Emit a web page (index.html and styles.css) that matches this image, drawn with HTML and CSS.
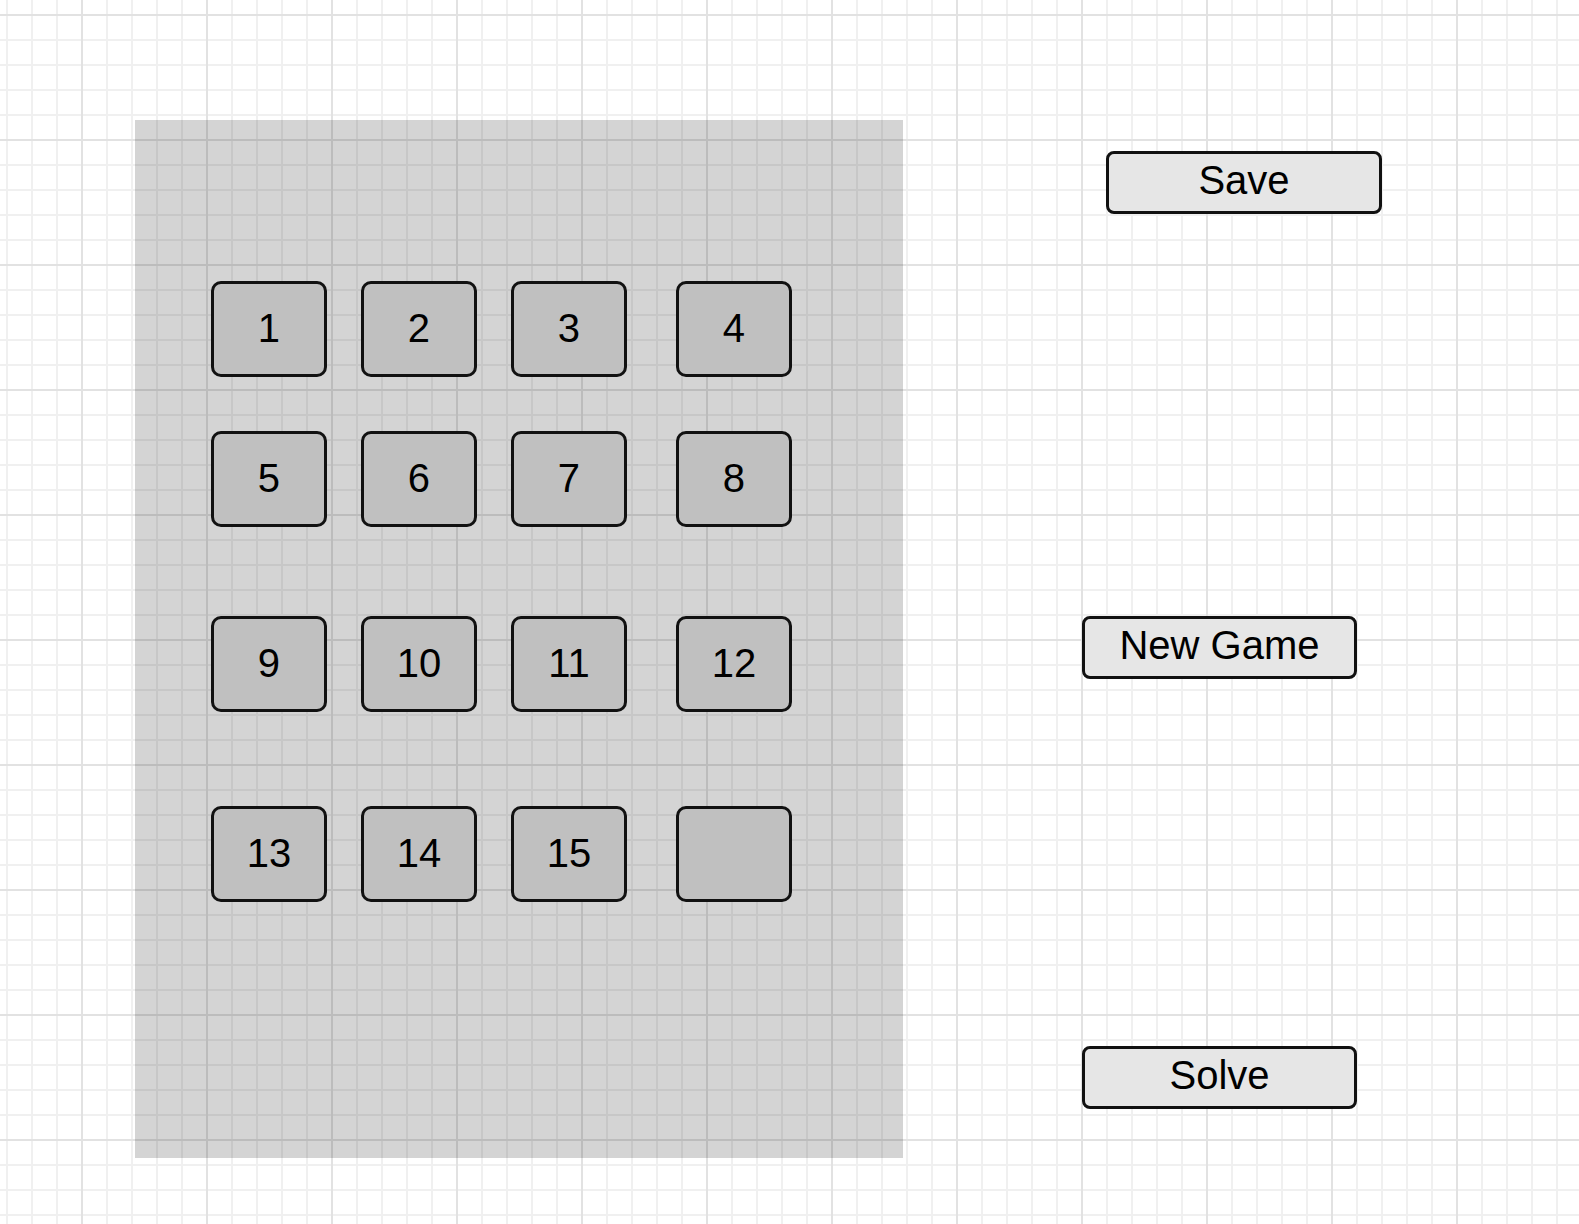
FILE: index.html
```html
<!DOCTYPE html>
<html lang="en">
<head>
<meta charset="utf-8">
<title>15 Puzzle</title>
<link rel="stylesheet" href="styles.css">
</head>
<body>
<div class="canvas">
  <div class="board">
    <div class="row row-1">
      <div class="tile">1</div>
      <div class="tile">2</div>
      <div class="tile">3</div>
      <div class="tile tile-last">4</div>
    </div>
    <div class="row row-2">
      <div class="tile">5</div>
      <div class="tile">6</div>
      <div class="tile">7</div>
      <div class="tile tile-last">8</div>
    </div>
    <div class="row row-3">
      <div class="tile">9</div>
      <div class="tile">10</div>
      <div class="tile">11</div>
      <div class="tile tile-last">12</div>
    </div>
    <div class="row row-4">
      <div class="tile">13</div>
      <div class="tile">14</div>
      <div class="tile">15</div>
      <div class="tile tile-last"></div>
    </div>
  </div>
  <div class="controls">
    <div class="btn btn-save">Save</div>
    <div class="btn btn-new">New Game</div>
    <div class="btn btn-solve">Solve</div>
  </div>
</div>
</body>
</html>
```

FILE: styles.css
```css
* { box-sizing: border-box; }

html, body {
  margin: 0;
  padding: 0;
}

html {
  min-height: 100%;
  background-color: #ffffff;
  background-image:
    linear-gradient(90deg, #e2e2e2 0, #e2e2e2 2px, transparent 2px),
    linear-gradient(180deg, #e2e2e2 0, #e2e2e2 2px, transparent 2px),
    linear-gradient(90deg, #f0f0f0 0, #f0f0f0 2px, transparent 2px),
    linear-gradient(180deg, #f0f0f0 0, #f0f0f0 2px, transparent 2px);
  background-size: 125px 125px, 125px 125px, 25px 25px, 25px 25px;
  background-position: 81px 0, 0 14px, 6px 0, 0 14px;
}

body {
  font-family: "Liberation Sans", Arial, sans-serif;
  color: #000;
  min-height: 1224px;
}

.canvas {
  display: flex;
  align-items: flex-start;
}

.board {
  margin-left: 135px;
  margin-top: 120px;
  width: 768px;
  height: 1038px;
  background: rgba(0, 0, 0, 0.17);
  padding-top: 160.7px;
  padding-left: 75.7px;
  display: flex;
  flex-direction: column;
}

.row {
  display: flex;
  gap: 33.5px;
}

.row-2 { margin-top: 54px; }
.row-3 { margin-top: 89px; }
.row-4 { margin-top: 94px; }

.tile {
  width: 116.5px;
  height: 96px;
  background: #c0c0c0;
  border: 3px solid #111;
  border-radius: 10px;
  display: flex;
  align-items: center;
  justify-content: center;
  font-size: 40px;
  line-height: 1;
  padding-bottom: 2px;
}

.tile-last { margin-left: 15px; }

.controls {
  margin-left: 179px;
  padding-top: 151px;
  display: flex;
  flex-direction: column;
  align-items: flex-start;
}

.btn {
  width: 275px;
  height: 63.3px;
  background: #e6e6e6;
  border: 3px solid #111;
  border-radius: 8px;
  display: flex;
  align-items: center;
  justify-content: center;
  font-size: 40px;
  line-height: 1;
  padding-bottom: 6px;
}

.btn-save {
  margin-left: 23.7px;
  width: 276.6px;
}

.btn-new { margin-top: 401.7px; }
.btn-solve { margin-top: 366.7px; }
```
